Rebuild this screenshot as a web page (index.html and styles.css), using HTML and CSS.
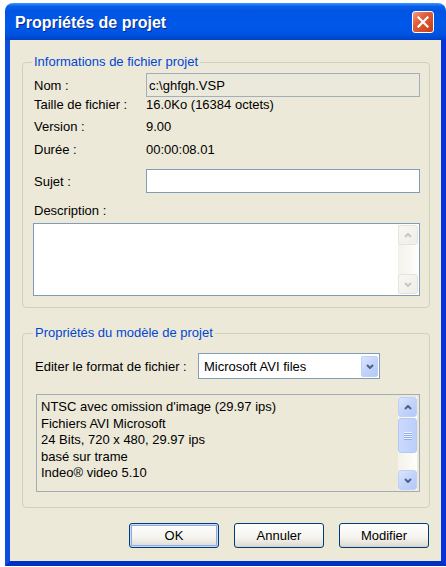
FILE: index.html
```html
<!DOCTYPE html>
<html lang="fr">
<head>
    <meta charset="UTF-8">
    <title>Propriétés de projet</title>
    <link rel="stylesheet" href="styles.css">
</head>
<body>
    <div class="window">
        <div class="titlebar">
            <span class="title">Propriétés de projet</span>
            <button class="close" title="Fermer">
                <svg width="12" height="12" viewBox="0 0 12 12"><path d="M1.5 1.5 L10.5 10.5 M10.5 1.5 L1.5 10.5" stroke="#fff" stroke-width="2.2" stroke-linecap="square"/></svg>
            </button>
        </div>
        <div class="client">
            <fieldset class="group info">
                <legend>Informations de fichier projet</legend>
                <div class="field-row">
                    <span class="label">Nom :</span>
                    <div class="edit disabled">c:\ghfgh.VSP</div>
                </div>
                <div class="text-row size">
                    <span class="label">Taille de fichier :</span>
                    <span>16.0Ko (16384 octets)</span>
                </div>
                <div class="text-row version">
                    <span class="label">Version :</span>
                    <span>9.00</span>
                </div>
                <div class="text-row duration">
                    <span class="label">Durée :</span>
                    <span>00:00:08.01</span>
                </div>
                <div class="field-row subject">
                    <span class="label">Sujet :</span>
                    <div class="edit"></div>
                </div>
                <div class="desc-label">Description :</div>
                <div class="memo">
                    <div class="scrollbar off">
                        <div class="sb-btn">
                            <svg width="8" height="5" viewBox="0 0 8 5"><path d="M1 4 L4 1 L7 4" fill="none" stroke="#c9c7b8" stroke-width="2"/></svg>
                        </div>
                        <div class="sb-track"></div>
                        <div class="sb-btn">
                            <svg width="8" height="5" viewBox="0 0 8 5"><path d="M1 1 L4 4 L7 1" fill="none" stroke="#c9c7b8" stroke-width="2"/></svg>
                        </div>
                    </div>
                </div>
            </fieldset>

            <fieldset class="group template">
                <legend>Propriétés du modèle de projet</legend>
                <div class="format-row">
                    <span class="format-label">Editer le format de fichier :</span>
                    <div class="select">
                        <span class="select-value">Microsoft AVI files</span>
                        <div class="drop-btn">
                            <svg width="8" height="5" viewBox="0 0 8 5"><path d="M1 1 L4 4 L7 1" fill="none" stroke="#4d6185" stroke-width="2"/></svg>
                        </div>
                    </div>
                </div>
                <div class="listbox">
                    <div class="list-text">
                        <div>NTSC avec omission d'image (29.97 ips)</div>
                        <div>Fichiers AVI Microsoft</div>
                        <div>24 Bits, 720 x 480, 29.97 ips</div>
                        <div>basé sur trame</div>
                        <div>Indeo® video 5.10</div>
                    </div>
                    <div class="scrollbar">
                        <div class="sb-btn">
                            <svg width="8" height="5" viewBox="0 0 8 5"><path d="M1 4 L4 1 L7 4" fill="none" stroke="#4d6185" stroke-width="2"/></svg>
                        </div>
                        <div class="sb-track">
                            <div class="thumb"><div class="grip"></div></div>
                        </div>
                        <div class="sb-btn">
                            <svg width="8" height="5" viewBox="0 0 8 5"><path d="M1 1 L4 4 L7 1" fill="none" stroke="#4d6185" stroke-width="2"/></svg>
                        </div>
                    </div>
                </div>
            </fieldset>

            <div class="buttons">
                <button class="btn default">OK</button>
                <button class="btn">Annuler</button>
                <button class="btn">Modifier</button>
            </div>
        </div>
    </div>
</body>
</html>
```

FILE: styles.css
```css
* {
    box-sizing: border-box;
}
body {
    margin: 0;
    background: #fff;
    font-family: "Liberation Sans", Arial, sans-serif;
    font-size: 13px;
    color: #000;
}
.window {
    width: 441px;
    margin: 3px 0 0 5px;
}
.titlebar {
    height: 37px;
    display: flex;
    align-items: center;
    justify-content: space-between;
    padding: 3px 12px 0 10px;
    border-radius: 8px 8px 0 0;
    background: linear-gradient(to bottom, #3d95ff 0%, #0a5fe9 9%, #0054e3 22%, #0058ea 60%, #0053e1 85%, #0041c4 100%);
}
.title {
    color: #fff;
    font-weight: bold;
    font-size: 16px;
    text-shadow: 1px 1px #0c2a8c;
}
.close {
    width: 22px;
    height: 22px;
    padding: 0;
    margin-top: -3px;
    border: 1px solid #fff;
    border-radius: 3px;
    background: linear-gradient(135deg, #f0a088 0%, #e2603c 35%, #d34a24 75%, #c13e1c 100%);
    display: flex;
    align-items: center;
    justify-content: center;
}
.client {
    height: 526px;
    background: #ece9d8;
    border: 5px solid #0054e3;
    border-top: 0;
    border-left-color: #0a4fe0;
    border-right-color: #0831d9;
    border-bottom-color: #0030c4;
    overflow: hidden;
}

/* group boxes */
.group {
    margin: 0 11px 0 12px;
    padding: 3px 9px 11px 11px;
    border: 1px solid #d0d0bf;
    border-radius: 4px;
    min-width: 0;
}
.group legend {
    color: #0046d5;
    line-height: 16px;
    padding: 0 2px;
    margin-left: -2px;
}
.info {
    margin-top: 14px;
}
.label {
    width: 112px;
    flex: none;
}
.field-row {
    display: flex;
    align-items: center;
    height: 24px;
}
.edit {
    flex: 1;
    height: 24px;
    border: 1px solid #7f9db9;
    background: #fff;
    padding: 0 2px;
    display: flex;
    align-items: center;
}
.edit.disabled {
    background: #ebe9dc;
    border-color: #a3aebb;
}
.text-row {
    display: flex;
    line-height: 15px;
}
.version { margin-top: 7px; }
.duration { margin-top: 8px; }
.subject { margin-top: 12px; }
.desc-label {
    margin-top: 10px;
    line-height: 15px;
}
.memo {
    margin: 5px 0 0 -1px;
    height: 73px;
    border: 1px solid #7f9db9;
    background: #fff;
    display: flex;
    justify-content: flex-end;
    padding: 1px 1px 1px 0;
}

/* scrollbars */
.scrollbar {
    width: 20px;
    display: flex;
    flex-direction: column;
    background: linear-gradient(to right, #f3f1ea, #fefefb);
}
.sb-btn {
    height: 20px;
    flex: none;
    display: flex;
    align-items: center;
    justify-content: center;
    border: 1px solid #bfd0f7;
    border-radius: 3px;
    background: linear-gradient(135deg, #dbe5fd 0%, #c3d4fb 50%, #b3c8f7 100%);
}
.off .sb-btn {
    border-color: #e6e4da;
    background: linear-gradient(135deg, #f8f7f3 0%, #efeee7 100%);
}
.sb-track {
    flex: 1;
    padding-top: 1px;
}
.thumb {
    height: 35px;
    border: 1px solid #b5c9f6;
    border-radius: 3px;
    background: linear-gradient(to right, #cbd9fd, #bccffa);
    display: flex;
    align-items: center;
    justify-content: center;
}
.grip {
    width: 8px;
    height: 8px;
    background: repeating-linear-gradient(to bottom, #eef3ff 0, #eef3ff 1px, #8eaaf0 1px, #8eaaf0 2px);
}

/* template group */
.template {
    margin-top: 17px;
    padding: 12px 9px 15px 12px;
}
.format-row {
    display: flex;
    align-items: center;
    gap: 10px;
}
.format-label {
    width: 153px;
    flex: none;
}
.select {
    width: 182px;
    height: 26px;
    border: 1px solid #7f9db9;
    background: #fff;
    display: flex;
    align-items: center;
    justify-content: space-between;
    padding: 2px 1px 2px 5px;
}
.drop-btn {
    width: 17px;
    height: 21px;
    display: flex;
    align-items: center;
    justify-content: center;
    border: 1px solid #bfd0f7;
    border-radius: 2px;
    background: linear-gradient(135deg, #dbe5fd 0%, #c3d4fb 50%, #b3c8f7 100%);
}
.listbox {
    margin: 15px 0 0 1px;
    height: 98px;
    border: 1px solid #a2adba;
    background: #ece9d8;
    display: flex;
    padding: 2px 2px 1px 0;
}
.list-text {
    flex: 1;
    padding: 2px 0 0 4px;
    line-height: 16.5px;
}
.listbox .scrollbar {
    width: 19px;
}

/* buttons */
.buttons {
    display: flex;
    justify-content: flex-end;
    gap: 15px;
    margin-top: 15px;
    padding-right: 12px;
}
.btn {
    width: 90px;
    height: 25px;
    border: 1px solid #003c74;
    border-radius: 3px;
    background: linear-gradient(to bottom, #ffffff 0%, #f4f3ee 60%, #e3e0d6 90%, #d6d0c5 100%);
    font-family: "Liberation Sans", Arial, sans-serif;
    font-size: 13px;
    color: #000;
    padding: 0;
}
.btn.default {
    box-shadow: inset 0 0 0 1px #cbdaf6, inset 0 0 0 2px #8eabe9;
}
```
